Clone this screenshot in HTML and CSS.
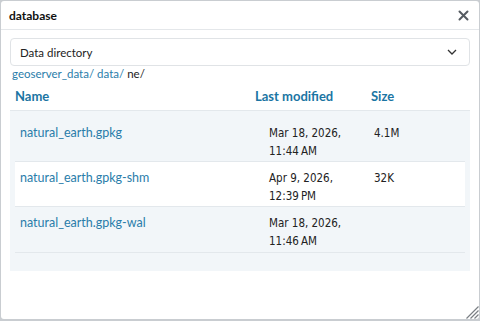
FILE: index.html
```html
<!DOCTYPE html>
<html lang="en">
<head>
    <meta charset="UTF-8">
    <title>database</title>
    <link rel="stylesheet" href="styles.css">
</head>
<body>
    <div class="dialog">
        <div class="dialog-header">
            <span class="dialog-title">database</span>
            <button class="close-btn" type="button">
                <svg width="11" height="11" viewBox="0 0 11 11"><path d="M1.5 1.5 L9.5 9.5 M9.5 1.5 L1.5 9.5" stroke="#555b61" stroke-width="2" stroke-linecap="round"/></svg>
            </button>
        </div>
        <div class="dialog-body">
            <div class="select">
                <span>Data directory</span>
                <svg width="10" height="6" viewBox="0 0 10 6"><path d="M1 1 L5 5 L9 1" fill="none" stroke="#333" stroke-width="1.3"/></svg>
            </div>
            <div class="breadcrumb">
                <a href="#">geoserver_data/</a> <a href="#">data/</a> <span>ne/</span>
            </div>
            <div class="table-head">
                <div class="col-name">Name</div>
                <div class="col-date">Last modified</div>
                <div class="col-size">Size</div>
            </div>
            <div class="table-body">
                <div class="row first">
                    <div class="col-name"><a href="#">natural_earth.gpkg</a></div>
                    <div class="col-date">Mar 18, 2026,<br>11:44&#8239;AM</div>
                    <div class="col-size">4.1M</div>
                </div>
                <div class="row even">
                    <div class="col-name"><a href="#">natural_earth.gpkg-shm</a></div>
                    <div class="col-date">Apr 9, 2026,<br>12:39&#8239;PM</div>
                    <div class="col-size">32K</div>
                </div>
                <div class="row last">
                    <div class="col-name"><a href="#">natural_earth.gpkg-wal</a></div>
                    <div class="col-date">Mar 18, 2026,<br>11:46&#8239;AM</div>
                    <div class="col-size"></div>
                </div>
            </div>
        </div>
        <div class="resize-handle">
            <svg width="15" height="15" viewBox="0 0 15 15"><path d="M14.5 2.5 L2.5 14.5 M14.5 6.5 L6.5 14.5 M14.5 10.5 L10.5 14.5" stroke="#7a7f84" stroke-width="1.2"/></svg>
        </div>
    </div>
</body>
</html>
```
FILE: styles.css
```css
body {
    margin: 0;
    padding: 0;
    background: #c9cdd1;
    font-family: Lato, 'Open Sans', sans-serif;
    font-size: 12.5px;
    color: #222;
}

.dialog {
    position: relative;
    margin: 1px;
    height: 318px;
    background: #fff;
    border-radius: 3px;
    box-sizing: border-box;
}

.dialog-header {
    display: flex;
    justify-content: space-between;
    align-items: center;
    height: 28px;
    padding: 0 8px;
    border-bottom: 1px solid #e4e7ea;
}

.dialog-title {
    font-weight: bold;
    font-size: 12px;
    color: #111;
}

.close-btn {
    border: none;
    background: none;
    padding: 0;
    margin-right: 2px;
    display: flex;
}

.dialog-body {
    padding: 8px 9px 0 9px;
}

.select {
    display: flex;
    justify-content: space-between;
    align-items: center;
    height: 26px;
    padding: 0 12px 0 9px;
    border: 1px solid #e0e3e6;
    border-radius: 4px;
    font-size: 11.5px;
    color: #222;
}

.breadcrumb {
    font-size: 11.5px;
    line-height: 16px;
    padding-left: 2px;
}

.breadcrumb a {
    color: #2a7daa;
    text-decoration: none;
}

.table-head,
.row {
    display: flex;
}

.table-head {
    font-weight: bold;
    font-size: 13px;
    color: #1b75a3;
    padding: 6px 0 5px 5px;
    height: 17px;
}

.table-head .col-name {
    width: 240px;
}

.table-head .col-date {
    width: 116px;
}

.table-body {
    background: #f2f6f9;
    border-top: 1px solid #e3e8ec;
    padding: 0 5px 18px 5px;
}

.row {
    padding: 7px 0 1px 0;
    border-bottom: 1px solid #e3e8ec;
    line-height: 18px;
}

.row.first {
    padding-top: 13px;
}

.row.last {
    padding-bottom: 2px;
}

.row.even {
    background: #fff;
}

.row .col-name {
    width: 249px;
    padding-left: 5px;
}

.row .col-name a {
    color: #2a7daa;
    text-decoration: none;
}

.row .col-date {
    width: 105px;
    font-family: 'DejaVu Sans Condensed', 'DejaVu Sans', sans-serif;
    font-size: 11.5px;
    color: #222;
}

.row .col-size {
    font-family: 'DejaVu Sans Condensed', 'DejaVu Sans', sans-serif;
    font-size: 11.5px;
}

.resize-handle {
    position: absolute;
    right: 0;
    bottom: 0;
    display: flex;
}
```
